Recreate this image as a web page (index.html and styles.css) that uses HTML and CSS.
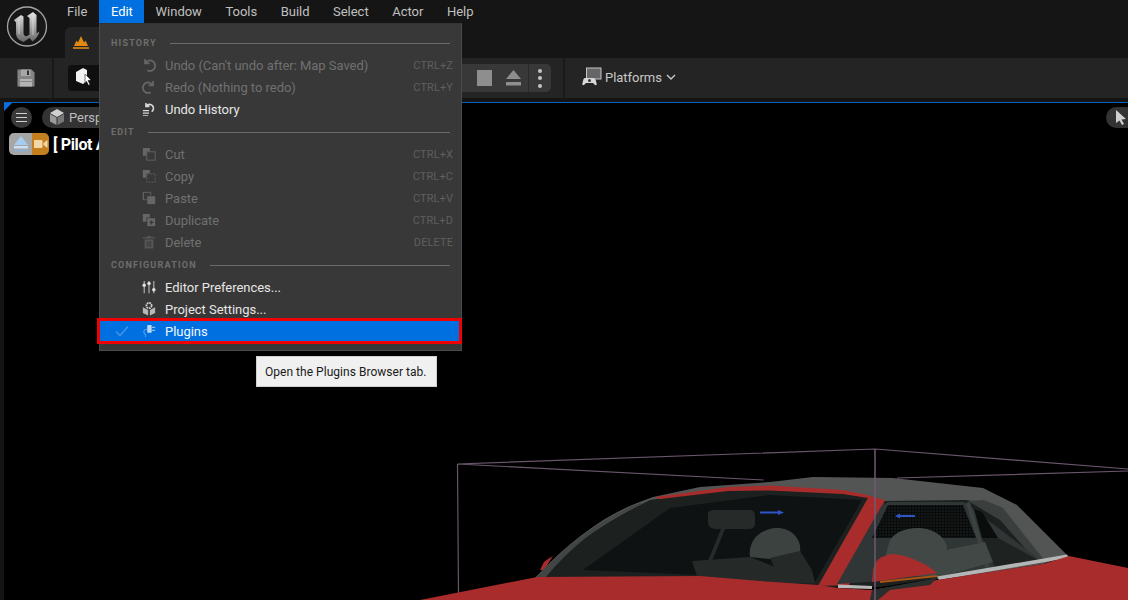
FILE: index.html
```html
<!DOCTYPE html>
<html lang="en">
<head>
<meta charset="utf-8">
<title>Unreal Editor</title>
<link rel="stylesheet" href="styles.css">
</head>
<body>
<div class="app">
  <header class="top">
    <div class="logo">
      <svg width="42" height="42" viewBox="0 0 42 42"><defs><linearGradient id="lg" x1="0" y1="0" x2="0" y2="1"><stop offset="0" stop-color="#e4e4e4"/><stop offset=".55" stop-color="#a0a0a0"/><stop offset="1" stop-color="#666"/></linearGradient></defs><circle cx="21" cy="20.500" r="19.500" fill="#181818" stroke="#a4a4a4" stroke-width="1.300"/><path d="M8 14L15 9L17.500 10.500V27C17.500 30 20 31 22 29.500L23.500 28.500V12L21 10L27 6L30.500 9V27.500L33.500 25.500C32.500 30 29.500 33 26.500 35.500L23.500 32L17.500 36C13 34.500 10 31.500 10 27V16.500z" fill="url(#lg)"/><path d="M13 13v15M27 9v20" stroke="#f0f0f0" stroke-width="1" opacity=".55"/></svg>
    </div>
    <div class="top-main">
      <nav class="menubar">
        <span class="mi">File</span><span class="mi active">Edit</span><span class="mi">Window</span><span class="mi">Tools</span><span class="mi">Build</span><span class="mi">Select</span><span class="mi">Actor</span><span class="mi">Help</span>
      </nav>
      <div class="tab">
        <svg width="16" height="14" viewBox="0 0 16 14"><path d="M1 10L3.500 4.500L5 6.500L8 0L11 6.500L12.500 4.500L15 10z" fill="#e08a12"/><rect x="0" y="11" width="16" height="2" fill="#b8741a"/></svg>
      </div>
    </div>
  </header>
  <div class="toolbar">
    <div class="tool-save">
      <svg width="18" height="18" viewBox="0 0 18 18"><path d="M0.500 0.500h14l3 3v14H0.500z" fill="#848484"/><rect x="4" y="0.500" width="9.500" height="6.500" fill="#a8a8a8"/><rect x="10" y="1.500" width="2" height="4.500" fill="#303030"/><rect x="3" y="10" width="12" height="7.500" fill="#b4b4b4"/><rect x="3" y="12" width="12" height="1" fill="#8a8a8a"/></svg>
    </div>
    <div class="sep"></div>
    <div class="mode">
      <svg width="18" height="20" viewBox="0 0 18 20"><path d="M0 5l7-4 4 2v11l-4 3-7-3z" fill="#f2f2f2"/><path d="M9 7l6 6-3 .5 2 4-1.500.8-2-4L9 16z" fill="#fff" stroke="#222" stroke-width=".6"/></svg>
    </div>
    <div class="spacer"></div>
    <div class="play-group">
      <div class="play-main">
        <span class="stop"></span>
        <svg width="17" height="16" viewBox="0 0 17 16"><path d="M8.500 0L16 9H1z" fill="#8e8e8e"/><rect x="1" y="12" width="15" height="3.500" fill="#8e8e8e"/></svg>
      </div>
      <div class="play-more"><i></i><i></i><i></i></div>
    </div>
    <div class="sep sep-wide"></div>
    <div class="platforms">
      <svg width="20" height="20" viewBox="0 0 20 20"><rect x="4.500" y="1" width="14.500" height="11" fill="#666" stroke="#c4c4c4" stroke-width="1"/><path d="M3 11h8c1.500 0 2.500 1 3 3l.7 3c.1 1.500-1.500 1.500-2.200.5L11 16H4l-1.500 1.500c-.7 1-2.300 1-2.200-.5L1 14c.3-2 1-3 2-3z" fill="#d8d8d8"/><circle cx="7.500" cy="13.500" r="1.500" fill="#333"/></svg>
      <span>Platforms</span>
      <svg class="chev" width="10" height="6" viewBox="0 0 10 6"><path d="M1 1l4 4 4-4" fill="none" stroke="#c8c8c8" stroke-width="1.400"/></svg>
    </div>
  </div>
  <div class="strip"></div>
  <main class="viewport">
    <span class="corner"></span>
    <svg class="scene" width="1124" height="497" viewBox="4 103 1124 497">
      <defs>
        <pattern id="mesh" width="3" height="3" patternUnits="userSpaceOnUse"><rect width="3" height="3" fill="#090b0b"/><circle cx="1" cy="1" r=".7" fill="#262b2a"/></pattern>
      </defs>
      <g fill="none" stroke="#6a566c" stroke-width="1.200">
        <path d="M457.500 464L875 449l253 20M457.500 464l306 16M457.500 464l1 130M897 478l231-7"/>
      </g>
      <path d="M540 570l4-8 4-3 5-3-9 14z" fill="#a82c2c"/>
      <path d="M535 578C570 540 606 515 637 503L653 497L700 487L770 482L813 477L893 478L983 488L1017 505L1067 555L1043 564L960 577L780 590L560 590z" fill="#535555"/>
      <path d="M538 578C572 544 608 520 650 500L728 489L843 491L885 501L966 500L1000 507L1043 562L880 587L600 590z" fill="#1c2120"/>
      <path d="M535 578C570 541 606 516 640 503L642 504C606 519 572 545 545 578z" fill="#414543"/>
      <path d="M968 501L984 500L1003 508L1045 561L1038 563L1000 520z" fill="#3a3f3d"/>
      <path d="M655 497L728 487L770 485.500L843 490L867 495L885 500L849 585L818 586L868 498L843 494L770 490.500L728 491L660 499z" fill="#a92c2c"/>
      <path d="M583 570L670 508L770 495L862 500L815 582L700 575z" fill="#0e1212"/>
      <path d="M708 514Q708 510 715 510H750Q755 510 755 516V524Q755 529 748 529H716Q708 529 708 522z" fill="#262b2a"/>
      <path d="M721 529l4 0-13 32-4 0z" fill="#262b2a"/>
      <path d="M692 561L750 557L815 583L700 585z" fill="#252a29"/>
      <path d="M750 557C748 542 758 530 775 528C792 527 802 540 800 552L780 560z" fill="#3c4240"/>
      <path d="M770 558L800 551L812 570L815 583L780 580z" fill="#252a29"/>
      <path d="M760 511.500h18v-1.500l6 2.500-6 2.500v-1.500h-18z" fill="#2e55c8"/>
      <path d="M837 584L882 505L888 502L964 502L1043 562L940 577z" fill="#2f3635"/>
      <path d="M872 538L888 505L963 505L976 538z" fill="url(#mesh)"/>
      <path d="M974 509L982 512L998 538L982 538z" fill="#0b0d0d"/>
      <path d="M982 538L998 538L1040 561L995 568z" fill="#1e2322"/>
      <path d="M966 503l4-1 20 67-4 1z" fill="#3c4240"/>
      <path d="M895 516l5-2.500v1.500h15v2h-15v1.500z" fill="#2e55c8"/>
      <path d="M889 543C893 530 915 525 930 530C945 535 949 548 946 550L985 542L993 562L940 577L880 575z" fill="#414845"/>
      <path d="M838 584.500l34 1.500 0 3-34-1z" fill="#b8b8b8"/>
      <path d="M937 576.500L1067 554.500L1069 558L939 580z" fill="#b4b6b6"/>
      <path d="M420 600L537 577L700 576L760 581L818 585L838 588L872 590L937 580L1043 564L1069 556L1128 568V600z" fill="#a92c2c"/>
      <path d="M870 600L872 590L937 578L930 585L890 590L878 600z" fill="#2a2e2d"/>
      <path d="M872 582L873 570C875 560 880 556 893 554C905 555 925 562 937 573L880 581z" fill="#a92c2c"/>
      <path d="M880 581L937 575L937 577L880 583z" fill="#a85510"/>
      <path d="M875 449v151" fill="none" stroke="#6f5a70" stroke-width="1.500"/>
    </svg>
    <div class="vp-left">
      <div class="vp-row">
        <span class="round-btn"><i></i><i></i><i></i></span>
        <span class="persp">
          <svg width="18" height="18" viewBox="0 0 18 18"><path d="M9 1l7 4-7 4-7-4z" fill="#d0d0d0"/><path d="M2 6l6.500 3.500V17L2 13.500z" fill="#9a9a9a"/><path d="M16 6L9.500 9.500V17L16 13.500z" fill="#777"/></svg>
          <span>Perspective</span>
        </span>
      </div>
      <div class="vp-row vp-row2">
        <span class="pilot-icons">
          <span class="eject"><svg width="16" height="20" viewBox="0 0 16 20"><path d="M8 2l7 9H1z" fill="#a4cdf0"/><rect x="1" y="12" width="14" height="2.500" fill="#c8e0f6"/><rect x="1" y="16" width="14" height="1.500" fill="#8ab0d8"/></svg></span>
          <span class="cam"><svg width="14" height="12" viewBox="0 0 14 12"><rect x="0" y="2" width="8.500" height="8" rx="1" fill="#f3d8a8"/><path d="M9.500 5l4-3v8l-4-3z" fill="#f3d8a8"/></svg></span>
        </span>
        <span class="pilot">[ Pilot Active - Car ]</span>
      </div>
    </div>
    <span class="select-btn"><svg width="12" height="15" viewBox="0 0 12 15"><path d="M1 0l10 9-4.500.5 2.500 4.500-2 1-2.500-4.500L1 13z" fill="#cfcfcf"/></svg></span>
  </main>

  <div class="menu">
    <div class="sec"><span>HISTORY</span><hr></div>
    <div class="row off"><span class="check"></span><span class="ico"><svg viewBox="0 0 16 16"><path d="M3.500 1v5h5M4 5.500A6 6 0 1 1 6 14" fill="none" stroke="#666" stroke-width="2"/></svg></span><span class="lbl">Undo (Can't undo after: Map Saved)</span><span class="key">CTRL+Z</span></div>
    <div class="row off"><span class="check"></span><span class="ico"><svg viewBox="0 0 16 16"><path d="M12.500 1v5h-5M12 5.500A6 6 0 1 0 10 14" fill="none" stroke="#666" stroke-width="2"/></svg></span><span class="lbl">Redo (Nothing to redo)</span><span class="key">CTRL+Y</span></div>
    <div class="row"><span class="check"></span><span class="ico"><svg viewBox="0 0 16 16"><path d="M4.500 1v4h4M5 4.500A4.500 4.500 0 1 1 11 11" fill="none" stroke="#d8d8d8" stroke-width="1.800"/><path d="M1 9h7v1.500H1zM1 12h7v1.500H1zM1 15h6v1H1z" fill="#d8d8d8"/></svg></span><span class="lbl">Undo History</span></div>
    <div class="sec"><span>EDIT</span><hr></div>
    <div class="row off"><span class="check"></span><span class="ico"><svg viewBox="0 0 16 16"><path d="M1 1h8v4H5v5H1z" fill="#666"/><rect x="5.500" y="5.500" width="9.500" height="9.500" fill="none" stroke="#666" stroke-width="1"/></svg></span><span class="lbl">Cut</span><span class="key">CTRL+X</span></div>
    <div class="row off"><span class="check"></span><span class="ico"><svg viewBox="0 0 16 16"><path d="M1 1h8v4H5v5H1z" fill="#666"/><rect x="5.500" y="5.500" width="9.500" height="9.500" fill="none" stroke="#666" stroke-width="1" stroke-dasharray="2 1.500"/></svg></span><span class="lbl">Copy</span><span class="key">CTRL+C</span></div>
    <div class="row off"><span class="check"></span><span class="ico"><svg viewBox="0 0 16 16"><path d="M1.500 10V1.500h8.500V5" fill="none" stroke="#666"/><path d="M1.500 1.500V10H6" fill="none" stroke="#666"/><rect x="6" y="6" width="9" height="9" fill="#666"/></svg></span><span class="lbl">Paste</span><span class="key">CTRL+V</span></div>
    <div class="row off"><span class="check"></span><span class="ico"><svg viewBox="0 0 16 16"><path d="M1 1h8v4H5v5H1z" fill="#666"/><rect x="6" y="6" width="9" height="9" fill="#666"/><path d="M10 8.500h1.500V10H13v1.500h-1.500V13H10v-1.500H8.500V10H10z" fill="#383838"/></svg></span><span class="lbl">Duplicate</span><span class="key">CTRL+D</span></div>
    <div class="row off"><span class="check"></span><span class="ico"><svg viewBox="0 0 16 16"><path d="M1 2.500h14V4H1zM5.500 1h5v1.500h-5zM3 5h10v10.500H3z" fill="#555"/><path d="M6 7v6.500M8 7v6.500M10 7v6.500" stroke="#383838"/></svg></span><span class="lbl">Delete</span><span class="key">DELETE</span></div>
    <div class="sec"><span>CONFIGURATION</span><hr></div>
    <div class="row"><span class="check"></span><span class="ico"><svg viewBox="0 0 16 16"><path d="M2.500 1v14M8 1v14M13.500 1v14" stroke="#bdbdbd" stroke-width="1.200"/><circle cx="2.500" cy="6" r="2" fill="#e0e0e0"/><circle cx="8" cy="4" r="2" fill="#e0e0e0"/><circle cx="13.500" cy="11" r="2" fill="#e0e0e0"/></svg></span><span class="lbl">Editor Preferences...</span></div>
    <div class="row"><span class="check"></span><span class="ico"><svg viewBox="0 0 16 16"><circle cx="8" cy="4" r="3" fill="none" stroke="#d0d0d0" stroke-width="2" stroke-dasharray="2 .8"/><path d="M1 6l6 3v6.500l-6-3zM15 6L9 9v6.500l6-3z" fill="#b8b8b8"/></svg></span><span class="lbl">Project Settings...</span></div>
    <div class="row hot"><span class="check"><svg width="14" height="12" viewBox="0 0 14 12"><path d="M1 6.500l4 4 8-9" fill="none" stroke="#3f93e6" stroke-width="1.600"/></svg></span><span class="ico"><svg viewBox="0 0 16 16"><rect x="6" y="1" width="5" height="9" rx="1" fill="#bcdaf6"/><path d="M11 3h4v1.500h-4zM11 6.500h4V8h-4z" fill="#8cbdec"/><path d="M6 6C2 6 1 9 3 11c1.500 1.500 2 2.500 1 4" fill="none" stroke="#5ea6ec" stroke-width="1.200"/></svg></span><span class="lbl">Plugins</span></div>
  </div>
  <div class="tooltip">Open the Plugins Browser tab.</div>
</div>
</body>
</html>
```
FILE: styles.css
```css
* { box-sizing: border-box; }
html, body { margin: 0; height: 100%; background: #151515; overflow: hidden; }
body { font-family: Roboto, "Liberation Sans", sans-serif; font-size: 13px; letter-spacing: -.03px; color: #c8c8c8; }
hr { margin: 0; border: 0; }
i { display: block; }

.app { position: relative; width: 1128px; height: 600px; display: flex; flex-direction: column; }

.top { height: 58px; background: #151515; display: flex; flex: none; }
.logo { width: 65px; padding: 6px 0 0 6px; flex: none; }
.top-main { flex: 1; display: flex; flex-direction: column; }
.menubar { height: 24px; display: flex; }
.mi { padding: 4px 11.800px 0; line-height: 16px; height: 23px; color: #c0c0c0; }
.mi:first-child { padding-left: 2px; }
.mi.active { background: #0070e0; color: #fff; padding-right: 11px; }
.tab { margin-top: 3px; width: 60px; height: 31px; background: #242424; border-radius: 6px 0 0 0; padding: 9px 0 0 8px; }

.toolbar { height: 40px; background: #242424; display: flex; align-items: center; flex: none; }
.tool-save { width: 52px; padding-left: 17px; display: flex; align-items: center; }
.sep { width: 2px; height: 40px; background: #1a1a1a; }
.mode { margin-left: 14px; width: 70px; height: 26px; background: #0f0f0f; border-radius: 4px; padding: 2px 0 0 8px; }
.spacer { flex: 1; }
.play-group { width: 90px; height: 28px; background: #383838; border-radius: 0 5px 5px 0; display: flex; margin-right: 12px; }
.play-main { flex: 1; display: flex; align-items: center; justify-content: flex-end; gap: 13px; padding-right: 6px; border-right: 1px solid #2a2a2a; }
.stop { width: 15px; height: 16px; background: #8e8e8e; }
.play-more { width: 22px; display: flex; flex-direction: column; align-items: center; justify-content: center; gap: 3.500px; }
.play-more i { width: 4px; height: 4px; border-radius: 50%; background: #c4c4c4; }
.platforms { width: 563px; height: 38px; margin-bottom: 2px; display: flex; align-items: center; padding-left: 17px; gap: 3px; color: #c8c8c8; }
.chev { margin-left: 1px; }

.strip { height: 4px; background: #151515; flex: none; }
.viewport { position: relative; flex: 1; margin-left: 4px; background: #000; border-top: 1px solid #0062c4; overflow: hidden; }
.corner { position: absolute; left: 0; top: 0; width: 0; height: 0; border-top: 8px solid #0a70e0; border-right: 8px solid transparent; }
.scene { position: absolute; left: 0; top: 0; display: block; }
.vp-left { position: absolute; left: 5px; top: 2px; display: flex; flex-direction: column; }
.vp-row { display: flex; align-items: center; gap: 10px; height: 24px; padding-left: 2px; }
.round-btn { width: 21px; height: 21px; border-radius: 50%; background: #3a3a3a; display: flex; flex-direction: column; align-items: center; justify-content: center; gap: 3px; }
.round-btn i { width: 11px; height: 1px; background: #d0d0d0; }
.persp { height: 21px; width: 70px; background: #333; border-radius: 11px 0 0 11px; display: flex; align-items: center; gap: 3px; padding-left: 6px; color: #bcbcbc; white-space: nowrap; overflow: hidden; }
.persp svg { flex: none; }
.vp-row2 { gap: 4px; padding-left: 0; margin-top: 3px; }
.pilot-icons { display: flex; width: 40px; height: 22px; border-radius: 5px; overflow: hidden; flex: none; }
.eject { width: 23px; background: #a6a6a6; display: flex; align-items: center; justify-content: center; }
.cam { width: 17px; background: #c47f1f; display: flex; align-items: center; justify-content: center; }
.pilot { font-weight: 700; font-size: 16px; letter-spacing: -.35px; color: #fff; white-space: nowrap; }
.select-btn { position: absolute; left: 1102px; top: 4px; width: 30px; height: 21px; border-radius: 11px; background: #333; padding: 3px 0 0 9px; }

.menu { position: absolute; left: 99px; top: 23px; width: 363px; height: 328px; background: #383838; border: 1px solid #4a4a4a; border-top-color: #333; padding-top: 8px; }
.sec { display: flex; align-items: center; height: 22px; padding: 0 11px; gap: 13px; font-size: 9px; font-weight: 700; letter-spacing: 1.200px; color: #6e6e6e; }
.sec hr { flex: 1; height: 1px; background: #6a6a6a; }
.row + .sec { margin-top: 1px; }
.row { display: flex; align-items: center; height: 22px; color: #e6e6e6; padding-right: 8px; }
.row.off { color: #707070; }
.check { width: 42px; padding-left: 15px; display: flex; }
.ico { width: 23px; height: 14px; display: block; }
.ico svg { display: block; width: 14px; height: 14px; }
.lbl { flex: 1; white-space: nowrap; }
.key { font-size: 11px; letter-spacing: .1px; color: #5f5f5f; }
.row.hot { position: relative; background: #0070e0; color: #f2f8ff; outline: 3px solid #f00000; outline-offset: -1px; margin-left: -1px; width: 361px; padding-left: 1px; }

.tooltip { position: absolute; left: 256px; top: 356px; width: 181px; height: 31px; background: #f0f0f0; border: 1px solid #d0d0d0; color: #1a1a1a; font-size: 12px; letter-spacing: .03px; line-height: 30px; padding-left: 8px; white-space: nowrap; }
```
